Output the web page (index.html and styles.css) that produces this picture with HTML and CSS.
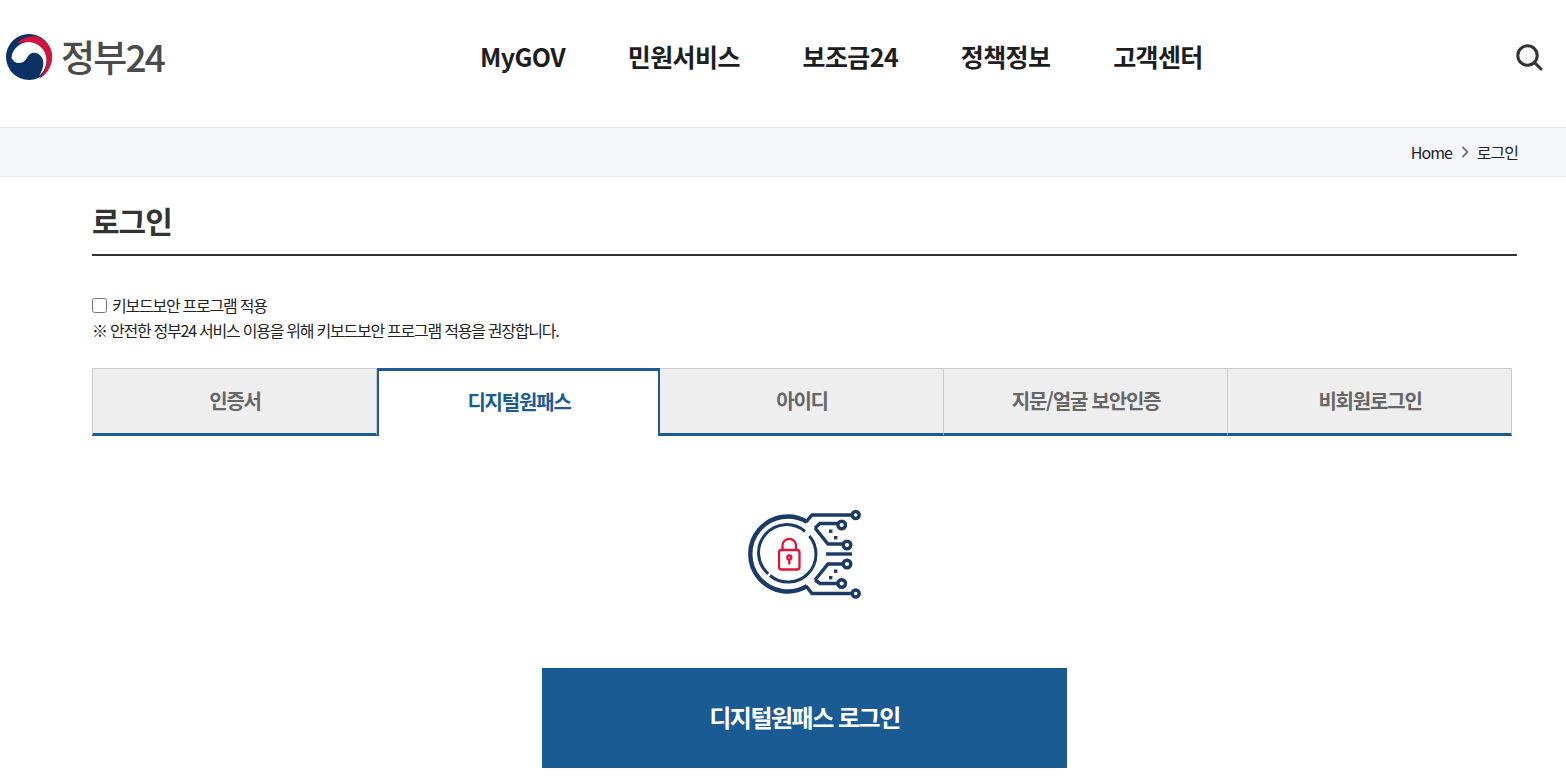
FILE: index.html
```html
<!DOCTYPE html>
<html lang="ko">
<head>
    <meta charset="UTF-8">
    <meta name="viewport" content="width=device-width, initial-scale=1.0">
    <title>로그인 | 정부24</title>
    <link rel="stylesheet" href="styles.css">
</head>
<body>

<!-- Header -->
<header class="site-header">
    <a class="logo" href="#">
        <svg class="logo-mark" width="46" height="46" viewBox="0 0 46 46">
            <circle cx="23" cy="23" r="23" fill="#0c3265"/>
            <path d="M5.500 24C6 15 14 8 23 8C32 8 39.500 15 40.500 24C41 31 38 38 33 42C37 36 38 30 37 26C35 20 29 17 24 20C21 22 20.500 27 16 28.500C11 30 7.500 28 5.500 24Z" fill="#fff"/>
            <path d="M11 9.500C16 4 24 1.500 31 2.500C41 6 47 15 46 25C45 34 40 41 33 45C39 38 41.500 31 40.500 24C39.500 15 32 8 23 8C18 8 14 8.500 11 9.500Z" fill="#d7123f"/>
        </svg>
        <span class="logo-text">정부24</span>
    </a>
    <nav class="main-nav">
        <a href="#">MyGOV</a>
        <a href="#">민원서비스</a>
        <a href="#">보조금24</a>
        <a href="#">정책정보</a>
        <a href="#">고객센터</a>
    </nav>
    <button class="search-button" aria-label="검색">
        <svg width="28" height="28" viewBox="0 0 28 28" fill="none" stroke="#333" stroke-width="3">
            <circle cx="12.500" cy="12.500" r="9.700"/>
            <path d="M19.500 19.500L26 26" stroke-linecap="round"/>
        </svg>
    </button>
</header>

<!-- Breadcrumb -->
<div class="breadcrumb">
    <a href="#">Home</a>
    <svg class="crumb-arrow" width="8" height="12" viewBox="0 0 8 12" fill="none" stroke="#777" stroke-width="1.800"><path d="M1.500 1L6.500 6L1.500 11"/></svg>
    <span>로그인</span>
</div>

<main class="content">
    <h1 class="page-title">로그인</h1>

    <!-- Keyboard security -->
    <div class="keyboard-security">
        <label class="keyboard-check"><input type="checkbox"> 키보드보안 프로그램 적용</label>
        <p>※ 안전한 정부24 서비스 이용을 위해 키보드보안 프로그램 적용을 권장합니다.</p>
    </div>

    <!-- Login tabs -->
    <ul class="login-tabs">
        <li><a href="#">인증서</a></li>
        <li class="active"><a href="#">디지털원패스</a></li>
        <li><a href="#">아이디</a></li>
        <li><a href="#">지문/얼굴 보안인증</a></li>
        <li><a href="#">비회원로그인</a></li>
    </ul>

    <div class="tab-panel">
        <svg class="onepass-icon" width="149" height="115" viewBox="0 0 149 115" fill="none" stroke="#1b3a66" stroke-width="3.400">
            <!-- rings -->
            <path d="M77 26.800A37.500 37.500 0 1 0 77 91.200" stroke-width="4.400"/>
            <path d="M75 36.500A28 28 0 0 0 38.200 78.800" stroke-width="3"/>
            <path d="M40 80.500A28 28 0 0 0 79.400 41" stroke-width="3"/>
            <!-- circuit lines -->
            <path d="M76 27L82 20H122"/>
            <path d="M76 91L82 98.500H122"/>
            <path d="M85 33L90 28.500H107"/>
            <path d="M85 85L90 88.500H107"/>
            <path d="M85 33L98 49H113"/>
            <path d="M85 85L98 69H113"/>
            <path d="M96 59H122"/>
            <circle cx="125.700" cy="20" r="3.500"/>
            <circle cx="125.700" cy="98.500" r="3.500"/>
            <circle cx="111.700" cy="30" r="3.800"/>
            <circle cx="111.700" cy="88.500" r="3.800"/>
            <circle cx="117" cy="50" r="3.800"/>
            <circle cx="117" cy="69" r="3.800"/>
            <g fill="#1b3a66" stroke="none">
                <rect x="99" y="34.500" width="3.400" height="3.400"/>
                <rect x="104" y="41" width="3.400" height="3.400"/>
                <rect x="104" y="74.500" width="3.400" height="3.400"/>
                <rect x="99" y="81" width="3.400" height="3.400"/>
            </g>
            <!-- lock -->
            <g stroke="#e2143c" stroke-width="2.300">
                <rect x="49" y="55" width="20.500" height="19.500" rx="2.500"/>
                <path d="M52.500 55V50A6.800 6.800 0 0 1 66 50V55"/>
                <circle cx="59.300" cy="62.500" r="2"/>
                <path d="M59.300 64.500V69.500"/>
            </g>
        </svg>
        <a class="login-button" href="#">디지털원패스 로그인</a>
    </div>
</main>

</body>
</html>
```

FILE: styles.css
```css
* {
    box-sizing: border-box;
}
html, body {
    margin: 0;
    padding: 0;
    overflow: hidden;
    height: 778px;
}
body {
    font-family: "Noto Sans CJK KR", "Noto Sans", sans-serif;
    background-color: #fff;
    color: #222;
}
a {
    color: inherit;
    text-decoration: none;
}
.site-header {
    height: 128px;
    padding: 0 23px 14px 6px;
    display: flex;
    align-items: center;
    border-bottom: 1px solid #e3e4e8;
}
.logo {
    width: 474px;
    display: flex;
    align-items: center;
    gap: 9px;
}
.logo-text {
    font-size: 37px;
    line-height: 1;
    font-weight: 500;
    letter-spacing: -1.800px;
    color: #4b4b4b;
}
.main-nav {
    display: flex;
    gap: 62.750px;
    margin-bottom: 2px;
    font-size: 25px;
    font-weight: 700;
    letter-spacing: -0.600px;
    color: #1e1e1e;
}
.search-button {
    margin-left: auto;
    padding: 0;
    border: none;
    background: none;
    display: flex;
}
.breadcrumb {
    height: 49px;
    padding-right: 48px;
    display: flex;
    align-items: center;
    justify-content: flex-end;
    gap: 9px;
    font-size: 16px;
    letter-spacing: -1px;
    color: #222;
    background-color: #f4f6fa;
    border-bottom: 1px solid #ebecef;
}
.crumb-arrow {
    margin-right: -1px;
}
.content {
    padding: 0 49px 0 92px;
}
.page-title {
    margin: 0;
    height: 79px;
    padding-top: 23px;
    font-size: 30px;
    line-height: 40px;
    font-weight: 700;
    letter-spacing: -1px;
    color: #333;
    border-bottom: 2px solid #333;
}
.keyboard-security {
    margin-top: 37px;
    font-size: 16px;
    line-height: 25px;
    letter-spacing: -1.250px;
    color: #222;
}
.keyboard-check {
    display: flex;
    align-items: center;
    gap: 5px;
}
.keyboard-check input {
    width: 15px;
    height: 15px;
    margin: 0;
    flex: none;
}
.keyboard-security p {
    margin: 0;
}
.login-tabs {
    list-style: none;
    margin: 25px 5px 0 0;
    padding: 0;
    display: grid;
    grid-template-columns: repeat(5, 1fr);
    height: 68px;
}
.login-tabs li {
    background-color: #eee;
    border: 1px solid #ccc;
    border-left-width: 0;
    border-bottom: 3px solid #1b5b94;
}
.login-tabs li:first-child {
    border-left-width: 1px;
    margin-right: -1px;
}
.login-tabs a {
    display: flex;
    height: 100%;
    padding: 0 0 1px 1px;
    align-items: center;
    justify-content: center;
    font-size: 20px;
    font-weight: 700;
    letter-spacing: -1.200px;
    color: #666;
}
.login-tabs .active {
    background-color: #fff;
    border: 2px solid #1b5b94;
    border-top-width: 3px;
    border-bottom: none;
    margin-left: 1px;
    position: relative;
}
.login-tabs .active a {
    padding-bottom: 5px;
    color: #1b5b94;
}
.tab-panel {
    display: flex;
    flex-direction: column;
    align-items: center;
    padding-top: 59px;
}
.login-button {
    width: 525px;
    height: 100px;
    margin-top: 58px;
    padding-bottom: 3px;
    flex: none;
    display: flex;
    align-items: center;
    justify-content: center;
    font-size: 24px;
    font-weight: 700;
    letter-spacing: -1.500px;
    color: #fff;
    background-color: #1b5b94;
}
```
